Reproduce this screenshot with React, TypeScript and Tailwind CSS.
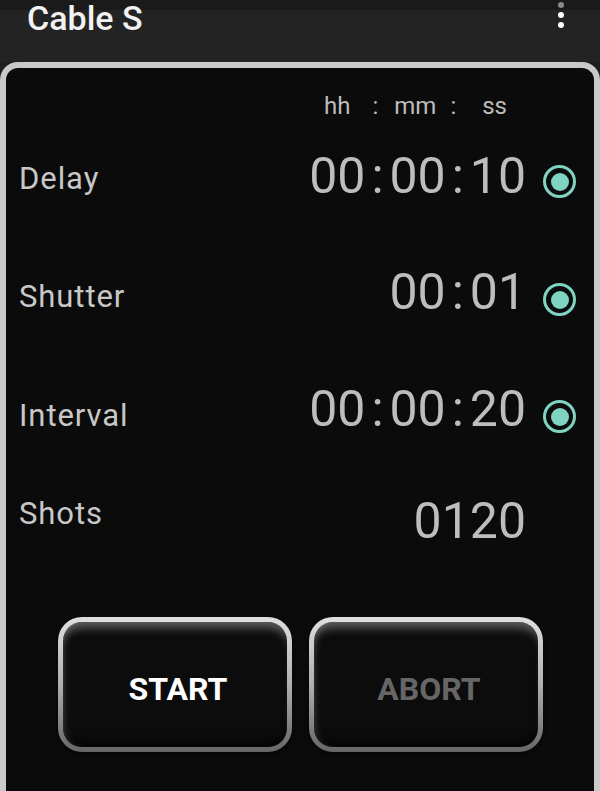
import React from "react";

type Row = {
  label: string;
  value: string;
  radio: boolean;
  h: string;
  labelMt: string;
  valueMt: string;
  radioMt: string;
};

const rows: Row[] = [
  { label: "Delay", value: "00:00:10", radio: true, h: "h-[119px]", labelMt: "mt-[45px]", valueMt: "mt-[33px]", radioMt: "mt-[47px]" },
  { label: "Shutter", value: "00:01", radio: true, h: "h-[118px]", labelMt: "mt-[44px]", valueMt: "mt-[30px]", radioMt: "mt-[46px]" },
  { label: "Interval", value: "00:00:20", radio: true, h: "h-[115px]", labelMt: "mt-[45px]", valueMt: "mt-[29px]", radioMt: "mt-[45px]" },
  { label: "Shots", value: "0120", radio: false, h: "h-[100px]", labelMt: "mt-[28px]", valueMt: "mt-[26px]", radioMt: "mt-0" },
];

// splits "00:00:10" so the colons get their own breathing room
function TimeValue({ value }: { value: string }) {
  const parts = value.split(":");
  return (
    <span className="flex text-[50px] leading-none text-[#bdbdbd]">
      {parts.map((p, i) => (
        <React.Fragment key={i}>
          {i > 0 && <span className="mx-[6px]">:</span>}
          <span>{p}</span>
        </React.Fragment>
      ))}
    </span>
  );
}

function Radio() {
  return (
    <div className="flex h-[33px] w-[33px] items-center justify-center rounded-full border-[3px] border-[#7fd3c3]">
      <div className="h-[18px] w-[18px] rounded-full bg-[#7fd3c3]" />
    </div>
  );
}

function PushButton({ label, dim }: { label: string; dim?: boolean }) {
  return (
    <div className="h-[135px] w-[234px] rounded-[24px] bg-gradient-to-b from-[#e0e0e0] via-[#b0b0b0] to-[#666666] p-[5px] shadow-[0_2px_4px_rgba(0,0,0,0.6)]">
      <div className="flex h-full w-full items-center justify-center rounded-[19px] bg-[#0c0c0c] pl-[7px] pt-[9px] shadow-[inset_0_12px_10px_-6px_rgba(190,190,190,0.45),inset_6px_0_8px_-6px_rgba(190,190,190,0.3),inset_0_-10px_10px_-6px_rgba(0,0,0,0.9)]">
        <span className={`text-[32px] font-bold leading-none ${dim ? "text-[#666666]" : "text-white"}`}>
          {label}
        </span>
      </div>
    </div>
  );
}

export default function App() {
  return (
    <div
      className="flex h-[791px] w-[600px] flex-col overflow-hidden bg-[#1e1e1e]"
      style={{ fontFamily: "Roboto, 'Noto Sans', sans-serif" }}
    >
      {/* app bar, status bar peeking in at the top */}
      <div className="relative h-[62px] shrink-0 bg-[#232323]">
        <div className="absolute inset-x-0 top-0 h-[10px] bg-[#1a1a1a]" />
        <div className="relative flex items-start justify-between pl-[27px] pr-[36px]">
          <span className="text-[34px] font-medium leading-[1.1] text-[#f2f2f2]">
            Cable S
          </span>
          <div className="mt-[2px] flex flex-col items-center gap-[4px]">
            <span className="h-[6px] w-[6px] rounded-full bg-[#8a8a8a]" />
            <span className="h-[6px] w-[6px] rounded-full bg-white" />
            <span className="h-[6px] w-[6px] rounded-full bg-white" />
          </div>
        </div>
      </div>

      {/* main card */}
      <div className="flex-1 rounded-t-[18px] border-[6px] border-b-0 border-[#c9c9c9] bg-[#0b0b0b]">
        <div className="mt-[26px] flex h-[24px] items-start justify-end pr-[87px] text-[24px] leading-none text-[#bdbdbd]">
          <span>hh</span>
          <span className="ml-[22px]">:</span>
          <span className="ml-[16px]">mm</span>
          <span className="ml-[14px]">:</span>
          <span className="ml-[26px]">ss</span>
        </div>

        {rows.map((r) => (
          <div key={r.label} className={`flex items-start pl-[13px] pr-[18px] ${r.h}`}>
            <span className={`flex-1 text-[31px] leading-none tracking-[0.03em] text-[#c8c8c8] ${r.labelMt}`}>
              {r.label}
            </span>
            <div className={r.valueMt}>
              <TimeValue value={r.value} />
            </div>
            <div className={`ml-[17px] w-[33px] ${r.radioMt}`}>{r.radio && <Radio />}</div>
          </div>
        ))}

        <div className="mt-[47px] flex justify-center gap-[17px]">
          <PushButton label="START" />
          <PushButton label="ABORT" dim />
        </div>
      </div>
    </div>
  );
}
